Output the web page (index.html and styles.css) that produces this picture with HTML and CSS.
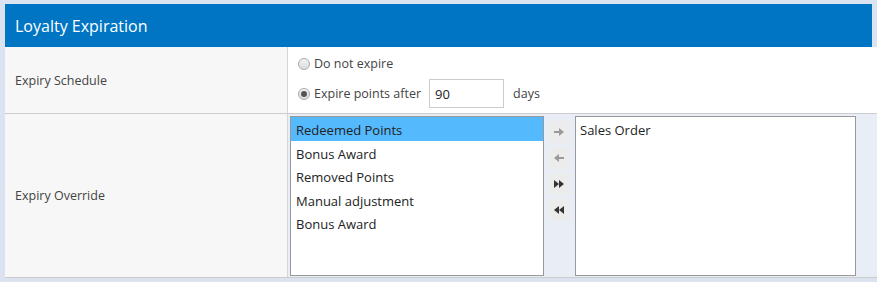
FILE: index.html
```html
<!DOCTYPE html>
<html lang="en">

<head>
    <meta charset="UTF-8">
    <title>Loyalty Expiration</title>
    <link rel="stylesheet" href="styles.css">
</head>

<body>
    <div class="panel">
        <div class="panel-header">Loyalty Expiration</div>

        <div class="row row-schedule">
            <div class="label">Expiry Schedule</div>
            <div class="value">
                <label class="radio-line">
                    <span class="radio"></span>
                    Do not expire
                </label>
                <label class="radio-line">
                    <span class="radio checked"></span>
                    Expire points after
                    <input type="text" class="days-input" value="90">
                    <span class="unit">days</span>
                </label>
            </div>
        </div>

        <div class="row row-override">
            <div class="label">Expiry Override</div>
            <div class="value picker">
                <ul class="list list-source">
                    <li class="selected">Redeemed Points</li>
                    <li>Bonus Award</li>
                    <li>Removed Points</li>
                    <li>Manual adjustment</li>
                    <li>Bonus Award</li>
                </ul>
                <div class="move-buttons">
                    <button type="button" class="move-btn">
                        <svg width="10" height="10" viewBox="0 0 10 10"><path d="M0 4h5V1l5 4-5 4V6H0z" fill="#9a9a9a"/></svg>
                    </button>
                    <button type="button" class="move-btn">
                        <svg width="10" height="10" viewBox="0 0 10 10"><path d="M10 4H5V1L0 5l5 4V6h5z" fill="#9a9a9a"/></svg>
                    </button>
                    <button type="button" class="move-btn">
                        <svg width="10" height="10" viewBox="0 0 10 10"><path d="M0 1l5 4-5 4zM5 1l5 4-5 4z" fill="#333"/></svg>
                    </button>
                    <button type="button" class="move-btn">
                        <svg width="10" height="10" viewBox="0 0 10 10"><path d="M5 1L0 5l5 4zM10 1L5 5l5 4z" fill="#333"/></svg>
                    </button>
                </div>
                <ul class="list list-target">
                    <li>Sales Order</li>
                </ul>
            </div>
        </div>
    </div>
</body>

</html>
```

FILE: styles.css
```css
body {
    margin: 0;
    padding: 4px 0 0 5px;
    background: #dbe3f0;
    font-family: "Open Sans", sans-serif;
    font-size: 12.5px;
    color: #333;
}

.panel-header {
    height: 42px;
    line-height: 42px;
    margin-right: 5px;
    padding: 1px 0 0 10px;
    background: #0075c4;
    color: #fff;
    font-size: 16px;
}

.row {
    display: flex;
    border-bottom: 1px solid #cccccc;
}

.row-schedule {
    height: 66px;
}

.row-override {
    height: 163px;
}

.label {
    width: 272px;
    padding-left: 10px;
    display: flex;
    align-items: center;
    background: #f7f7f7;
    border-right: 1px solid #d6d6d6;
    color: #444;
}

.value {
    flex: 1;
    background: #fff;
}

.row-schedule .value {
    padding: 9px 0 0 10px;
}

.radio-line {
    display: flex;
    align-items: center;
    height: 15px;
    margin-bottom: 8px;
    color: #444;
}

.radio-line:last-child {
    height: 29px;
    margin-bottom: 0;
}

.radio {
    width: 10px;
    height: 10px;
    margin-right: 4px;
    border: 1px solid #a8a8a8;
    border-radius: 50%;
    background: linear-gradient(#f4f4f4, #dcdcdc);
    position: relative;
}

.radio.checked::after {
    content: "";
    position: absolute;
    left: 2px;
    top: 2px;
    width: 6px;
    height: 6px;
    border-radius: 50%;
    background: #555;
}

.days-input {
    width: 68px;
    height: 27px;
    margin-left: 8px;
    padding: 0 0 0 5px;
    border: 1px solid #cccccc;
    font-family: "Open Sans", sans-serif;
    font-size: 13px;
    color: #222;
}

.unit {
    margin-left: 9px;
}

.picker {
    display: flex;
    align-items: flex-start;
    padding: 2px 0 0 2px;
    background: #e9edf6;
}

.list {
    list-style: none;
    margin: 0;
    padding: 0;
    height: 158px;
    border: 1px solid #999;
    background: #fff;
    font-size: 13px;
    color: #222;
}

.list li {
    height: 23.5px;
    line-height: 26px;
    padding-left: 5px;
}

.list li.selected {
    background: #55b9fd;
}

.list-source {
    width: 252px;
}

.list-target {
    width: 279px;
}

.list-target li {
    padding-left: 4px;
}

.move-buttons {
    display: flex;
    flex-direction: column;
    gap: 4px;
    padding-top: 5px;
    margin: 0 5px 0 4px;
}

.move-btn {
    width: 22px;
    height: 22px;
    padding: 0;
    border: none;
    background: #ececec;
    display: flex;
    align-items: center;
    justify-content: center;
}
```
